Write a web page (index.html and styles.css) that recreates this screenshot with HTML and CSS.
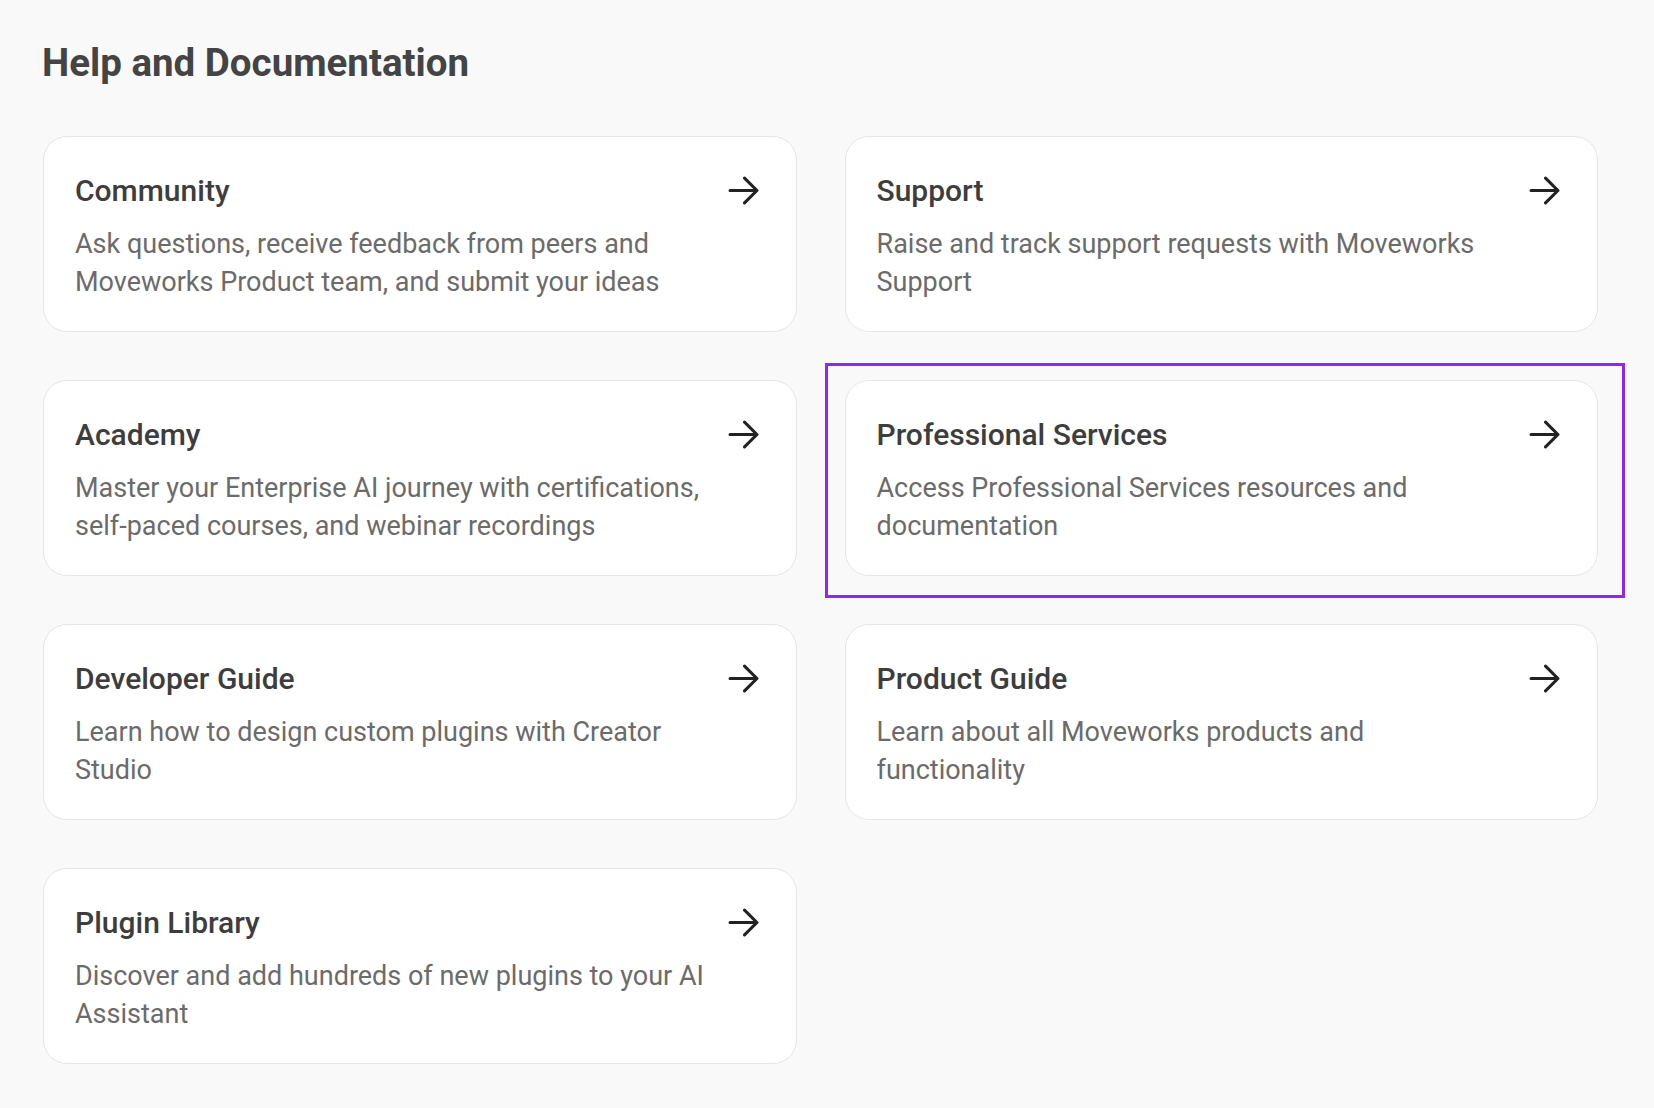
FILE: index.html
```html
<!DOCTYPE html>
<html lang="en">
<head>
    <meta charset="UTF-8">
    <meta name="viewport" content="width=device-width, initial-scale=1.0">
    <title>Help and Documentation</title>
    <link rel="stylesheet" href="styles.css">
</head>
<body>
    <h1 class="page-title">Help and Documentation</h1>

    <div class="card-grid">
        <a class="help-card" href="#">
            <div class="card-head">
                <h2>Community</h2>
                <svg class="arrow" viewBox="0 0 30 30"><path d="M2 15H28M16 3L28 15L16 27"/></svg>
            </div>
            <p>Ask questions, receive feedback from peers and Moveworks Product team, and submit your ideas</p>
        </a>

        <a class="help-card" href="#">
            <div class="card-head">
                <h2>Support</h2>
                <svg class="arrow" viewBox="0 0 30 30"><path d="M2 15H28M16 3L28 15L16 27"/></svg>
            </div>
            <p>Raise and track support requests with Moveworks Support</p>
        </a>

        <a class="help-card" href="#">
            <div class="card-head">
                <h2>Academy</h2>
                <svg class="arrow" viewBox="0 0 30 30"><path d="M2 15H28M16 3L28 15L16 27"/></svg>
            </div>
            <p>Master your Enterprise AI journey with certifications, self-paced courses, and webinar recordings</p>
        </a>

        <a class="help-card selected" href="#">
            <div class="card-head">
                <h2>Professional Services</h2>
                <svg class="arrow" viewBox="0 0 30 30"><path d="M2 15H28M16 3L28 15L16 27"/></svg>
            </div>
            <p>Access Professional Services resources and documentation</p>
        </a>

        <a class="help-card" href="#">
            <div class="card-head">
                <h2>Developer Guide</h2>
                <svg class="arrow" viewBox="0 0 30 30"><path d="M2 15H28M16 3L28 15L16 27"/></svg>
            </div>
            <p>Learn how to design custom plugins with Creator Studio</p>
        </a>

        <a class="help-card" href="#">
            <div class="card-head">
                <h2>Product Guide</h2>
                <svg class="arrow" viewBox="0 0 30 30"><path d="M2 15H28M16 3L28 15L16 27"/></svg>
            </div>
            <p>Learn about all Moveworks products and functionality</p>
        </a>

        <a class="help-card" href="#">
            <div class="card-head">
                <h2>Plugin Library</h2>
                <svg class="arrow" viewBox="0 0 30 30"><path d="M2 15H28M16 3L28 15L16 27"/></svg>
            </div>
            <p>Discover and add hundreds of new plugins to your AI Assistant</p>
        </a>
    </div>
</body>
</html>
```

FILE: styles.css
```css
body {
    margin: 0;
    padding: 40px 56px 0 43px;
    background: #f9f9f9;
    font-family: Roboto, "Liberation Sans", Arial, sans-serif;
}
.page-title {
    margin: 0 0 50px -1px;
    font-size: 38.5px;
    line-height: 46px;
    font-weight: 700;
    color: #444;
}
.card-grid {
    display: grid;
    grid-template-columns: 1fr 1fr;
    gap: 48px;
}
.help-card {
    position: relative;
    display: block;
    height: 196px;
    box-sizing: border-box;
    padding: 36px 37px 0 31px;
    background: #fff;
    border: 1px solid #e6e6e6;
    border-radius: 24px;
    text-decoration: none;
}
.card-head {
    display: flex;
    align-items: center;
    justify-content: space-between;
}
.help-card h2 {
    margin: 0;
    font-size: 30px;
    line-height: 35px;
    font-weight: 500;
    color: #3d3d3d;
}
.arrow {
    width: 31px;
    height: 31px;
    fill: none;
    stroke: #222;
    stroke-width: 3;
    stroke-linecap: round;
    stroke-linejoin: round;
}
.help-card p {
    max-width: 630px;
    margin: 17px 0 0;
    font-size: 27px;
    line-height: 38px;
    color: #6b6b6b;
}
.selected::after {
    content: "";
    position: absolute;
    top: -18px;
    left: -21px;
    right: -28px;
    bottom: -23px;
    border: 3px solid #9126ef;
}
```
